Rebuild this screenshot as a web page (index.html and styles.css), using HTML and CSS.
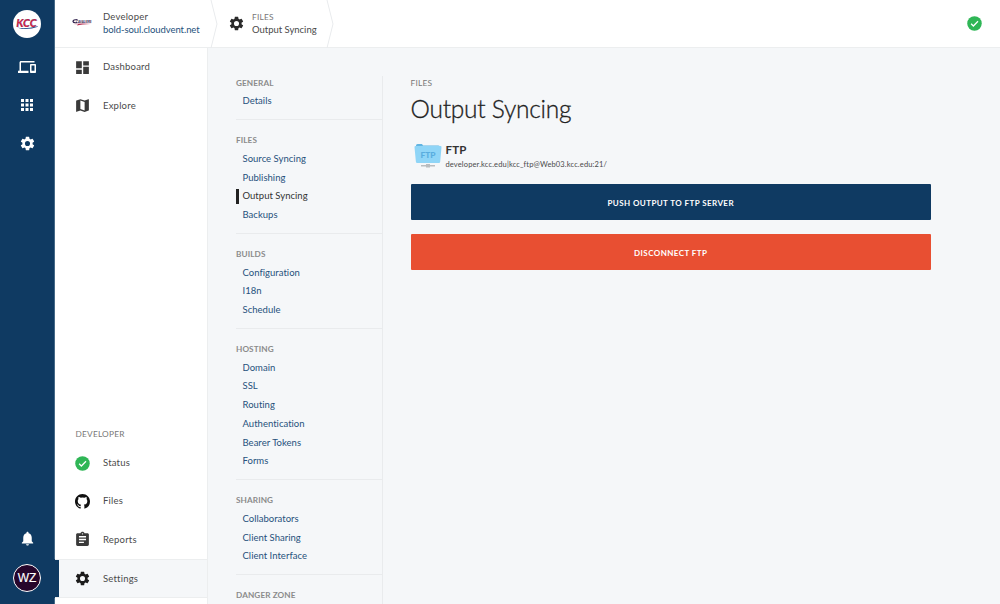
FILE: index.html
```
<!DOCTYPE html>
<html lang="en">
<head>
<meta charset="utf-8">
<title>Output Syncing</title>
<link rel="stylesheet" href="styles.css">
</head>
<body>
<svg width="0" height="0" class="defs">
  <symbol id="gear" viewBox="0 0 24 24"><path d="M19.14 12.94c.04-.3.06-.61.06-.94 0-.32-.02-.64-.07-.94l2.03-1.58a.49.49 0 0 0 .12-.61l-1.92-3.32a.49.49 0 0 0-.59-.22l-2.39.96c-.5-.38-1.03-.7-1.62-.94l-.36-2.54a.48.48 0 0 0-.48-.41h-3.84c-.24 0-.43.17-.47.41l-.36 2.54c-.59.24-1.13.57-1.62.94l-2.39-.96a.48.48 0 0 0-.59.22L2.74 8.87c-.12.21-.08.47.12.61l2.03 1.58c-.05.3-.09.63-.09.94s.02.64.07.94l-2.03 1.58a.49.49 0 0 0-.12.61l1.92 3.32c.12.22.37.29.59.22l2.39-.96c.5.38 1.03.7 1.62.94l.36 2.54c.05.24.24.41.48.41h3.84c.24 0 .44-.17.47-.41l.36-2.54c.59-.24 1.13-.56 1.62-.94l2.39.96c.22.08.47 0 .59-.22l1.92-3.32a.49.49 0 0 0-.12-.61l-2.01-1.58zM12 15.6A3.6 3.6 0 1 1 12 8.4a3.6 3.6 0 0 1 0 7.2z"/></symbol>
  <symbol id="check" viewBox="0 0 24 24"><circle cx="12" cy="12" r="11.6" fill="#2fb656"/><path d="M6.6 12.4l3.6 3.6 7.4-7.6" fill="none" stroke="#fff" stroke-width="2"/></symbol>
</svg>
<div class="app">
  <aside class="rail">
    <svg class="logo" viewBox="0 0 28 28"><circle cx="14" cy="14" r="14" fill="#fff"/><text class="logo-text" x="3.2" y="16.6" textLength="20.5" lengthAdjust="spacingAndGlyphs">KCC</text><path d="M4 17.600q8 2 20.500-1.400l.5.600q-7 2.800-16 2.200z" fill="#234a86"/></svg>
    <svg class="ic devices" viewBox="0 0 24 24"><path d="M4 6h18V4H4c-1.100 0-2 .9-2 2v11H0v3h14v-3H4V6zm19 2h-6c-.55 0-1 .45-1 1v10c0 .55.45 1 1 1h6c.55 0 1-.45 1-1V9c0-.55-.45-1-1-1zm-1 9h-4v-7h4v7z"/></svg>
    <svg class="ic apps" viewBox="0 0 24 24"><path d="M4 8h4V4H4v4zm6 12h4v-4h-4v4zm-6 0h4v-4H4v4zm0-6h4v-4H4v4zm6 0h4v-4h-4v4zm6-10v4h4V4h-4zm-6 4h4V4h-4v4zm6 6h4v-4h-4v4zm0 6h4v-4h-4v4z"/></svg>
    <svg class="ic cog"><use href="#gear"/></svg>
    <svg class="ic bell" viewBox="0 0 24 24"><path d="M12 22c1.100 0 2-.9 2-2h-4c0 1.100.89 2 2 2zm6-6v-5c0-3.070-1.640-5.640-4.500-6.320V4c0-.83-.67-1.500-1.500-1.500s-1.500.67-1.500 1.500v.68C7.630 5.360 6 7.920 6 11v5l-2 2v1h16v-1l-2-2z"/></svg>
    <div class="avatar">WZ</div>
  </aside>
  <div class="shell">
    <header class="top">
      <svg class="site-logo" viewBox="0 0 22 14"><path d="M5.500 4.500Q1 4.500 1 6.500q.5 1.800 4 1" fill="none" stroke="#33244f" stroke-width="1.200"/><text class="site-logo-text" x="4" y="7.800" textLength="15.500" lengthAdjust="spacingAndGlyphs">CAVALIERS</text><path d="M1 9q9-1 19 0-10-.2-15 1.600l1-1.300z" fill="#b3294d"/></svg>
      <div class="crumb site"><span>Developer</span><a>bold-soul.cloudvent.net</a></div>
      <svg class="chev" viewBox="0 0 8 48"><path d="M1 0L7 24 1 48"/></svg>
      <svg class="crumb-icon"><use href="#gear"/></svg>
      <div class="crumb page"><span class="cap">FILES</span><span>Output Syncing</span></div>
      <svg class="chev second" viewBox="0 0 8 48"><path d="M1 0L7 24 1 48"/></svg>
      <svg class="ok"><use href="#check"/></svg>
    </header>
    <div class="body">
      <nav class="side">
        <a class="row"><svg viewBox="0 0 24 24"><path d="M3 13h8V3H3v10zm0 8h8v-6H3v6zm10 0h8V11h-8v10zm0-18v6h8V3h-8z"/></svg><span>Dashboard</span></a>
        <a class="row"><svg viewBox="0 0 24 24"><path d="M20.500 3l-.16.03L15 5.100 9 3 3.360 4.900c-.21.070-.36.25-.36.480V20.500c0 .28.220.5.500.5l.16-.03L9 18.900l6 2.100 5.640-1.900c.21-.07.36-.25.36-.48V3.500c0-.28-.22-.5-.5-.5zM15 19l-6-2.110V5l6 2.110V19z"/></svg><span>Explore</span></a>
        <div class="side-title cap">DEVELOPER</div>
        <a class="row status"><svg class="round"><use href="#check"/></svg><span>Status</span></a>
        <a class="row files"><svg class="git" viewBox="0 0 16 16"><path d="M8 0C3.580 0 0 3.580 0 8c0 3.540 2.290 6.530 5.470 7.590.4.070.55-.17.55-.38 0-.19-.01-.82-.01-1.490-2.010.37-2.530-.49-2.690-.94-.09-.23-.48-.94-.82-1.130-.28-.15-.68-.52-.01-.53.63-.01 1.080.58 1.230.82.72 1.210 1.870.87 2.330.66.070-.52.28-.87.510-1.070-1.780-.2-3.640-.89-3.640-3.950 0-.87.310-1.590.82-2.150-.08-.2-.36-1.020.080-2.120 0 0 .67-.21 2.200.82a7.600 7.600 0 0 1 4 0c1.530-1.040 2.200-.82 2.200-.82.44 1.100.16 1.920.080 2.120.51.56.82 1.270.82 2.150 0 3.070-1.870 3.750-3.650 3.950.29.25.54.73.54 1.480 0 1.070-.01 1.930-.01 2.200 0 .21.15.46.55.38A8 8 0 0 0 16 8c0-4.420-3.580-8-8-8z"/></svg><span>Files</span></a>
        <a class="row"><svg viewBox="0 0 24 24"><path d="M19 3h-4.180C14.400 1.840 13.300 1 12 1S9.600 1.840 9.180 3H5c-1.100 0-2 .9-2 2v14c0 1.100.9 2 2 2h14c1.100 0 2-.9 2-2V5c0-1.100-.9-2-2-2zm-7 0a1 1 0 1 1 0 2 1 1 0 0 1 0-2zm2 14H7v-2h7v2zm3-4H7v-2h10v2zm0-4H7V7h10v2z"/></svg><span>Reports</span></a>
        <a class="row active"><svg><use href="#gear"/></svg><span>Settings</span></a>
      </nav>
      <nav class="menu">
        <section><h2>GENERAL</h2><a>Details</a></section>
        <section><h2>FILES</h2><a>Source Syncing</a><a>Publishing</a><a class="current">Output Syncing</a><a>Backups</a></section>
        <section><h2>BUILDS</h2><a>Configuration</a><a>I18n</a><a>Schedule</a></section>
        <section><h2>HOSTING</h2><a>Domain</a><a>SSL</a><a>Routing</a><a>Authentication</a><a>Bearer Tokens</a><a>Forms</a></section>
        <section><h2>SHARING</h2><a>Collaborators</a><a>Client Sharing</a><a>Client Interface</a></section>
        <section><h2>DANGER ZONE</h2></section>
      </nav>
      <main class="main">
        <div class="cap kicker">FILES</div>
        <h1>Output Syncing</h1>
        <div class="ftp">
          <svg class="folder" viewBox="0 0 28 26"><path d="M2 4V2.500Q2 1 3.500 1H8l1 1.500h15.500Q26 2.500 26 4v3H2z" fill="#62b5e2"/><path d="M1.500 3h25q1.200 0 1 1.300l-1.300 14.500Q26 20 25 20H3.200Q2 20 1.900 18.800L.5 4.300Q.4 3 1.500 3z" fill="#8fd5f7"/><text class="folder-text" x="6.500" y="15.200" textLength="15" lengthAdjust="spacingAndGlyphs">FTP</text><path d="M12 21h4v1h5v1.500h-5v1h-4v-1H7V22h5z" fill="#b9bdc0"/></svg>
          <div class="ftp-info"><strong>FTP</strong><small>developer.kcc.edu|kcc_ftp@Web03.kcc.edu:21/</small></div>
        </div>
        <button class="push">PUSH OUTPUT TO FTP SERVER</button>
        <button class="drop">DISCONNECT FTP</button>
      </main>
    </div>
  </div>
</div>
</body>
</html>
```
FILE: styles.css
```
* { box-sizing: border-box; }
body { margin: 0; font: 9.5px/12px Lato, "Open Sans", sans-serif; letter-spacing: .2px; color: #4a4a4a; background: #f5f7f9; overflow: hidden; }
.defs { display: block; position: absolute; }
svg { display: block; flex: none; }
.app { display: flex; height: 604px; }
.rail { width: 55px; background: #0f3a62; border-right: 1px solid #466987; display: flex; flex-direction: column; align-items: center; padding-top: 10px; flex: none; }
.logo { width: 28px; height: 28px; }
.logo-text { font: italic 900 10.5px Lato, sans-serif; letter-spacing: 0; fill: #d51f46; stroke: #26417e; stroke-width: .2px; }
.ic { width: 18px; height: 18px; fill: #fff; }
.devices { margin-top: 20px; }
.apps { margin-top: 20px; }
.cog { width: 17px; height: 17px; margin-top: 21px; }
.bell { width: 17px; height: 17px; margin-top: auto; }
.avatar { width: 28px; height: 28px; border: 1.5px solid #fff; border-radius: 50%; background: #27052b; color: #fff; font: 12px/27px "Liberation Sans", sans-serif; letter-spacing: 0; text-align: center; -webkit-text-stroke: .15px #fff; margin: 17px 0 12px; }
.shell { flex: 1; display: flex; flex-direction: column; min-width: 0; }
.top { height: 48px; background: #fff; border-bottom: 1px solid #eceeef; display: flex; align-items: center; padding: 0 18.5px 0 17px; flex: none; }
.site-logo { width: 22px; height: 14px; margin-top: -4px; overflow: visible; }
.site-logo-text { font: italic 900 4.5px Lato, sans-serif; letter-spacing: 0; fill: #33244f; }
.crumb { display: flex; flex-direction: column; line-height: 12.500px; white-space: nowrap; padding-top: .5px; }
.site { margin-left: 9px; width: 107px; }
.site a { color: #26517c; letter-spacing: -.07px; }
.chev { width: 8px; height: 48px; fill: none; stroke: #e9ebed; stroke-width: 1; }
.crumb-icon { width: 17px; height: 17px; fill: #2b2b2b; margin-left: 10px; }
.page { margin-left: 7px; width: 74px; letter-spacing: -.02px; }
.cap { color: #777; font-size: 8.300px; letter-spacing: .22px; }
.ok { width: 15px; height: 15px; margin-left: auto; }
.body { flex: 1; display: flex; min-height: 0; }
.side { width: 153px; background: #fff; border-right: 1px solid #eceeef; display: flex; flex-direction: column; padding-bottom: 6px; flex: none; }
.row { height: 38.500px; display: flex; align-items: center; padding-left: 19px; gap: 12px; }
.row svg { width: 17px; height: 17px; fill: #3a3a3a; }
.row .git { width: 15px; height: 15px; fill: #111; margin: 0 1px; }
.row .round { width: 15px; height: 15px; margin: 0 1px; }
.side-title { margin-top: auto; padding-left: 20.5px; height: 17px; }
.status { height: 37.500px; }
.files { height: 38.5px; }
.active { height: 39px; background: #f5f7f9; border-top: 1px solid #eceeef; border-bottom: 1px solid #eceeef; box-shadow: inset 4px 0 #0f3a62, -1px 0 #0f3a62; }
.row.active svg { fill: #1c1c1c; }
.menu { width: 147px; margin: 28px 0 0 28px; border-right: 1px solid #e9ebed; display: flex; flex-direction: column; flex: none; }
section { border-bottom: 1px solid #e9ebed; padding-bottom: 8.250px; margin-bottom: 10.250px; display: flex; flex-direction: column; flex: none; }
section:first-child { margin-top: -3px; }
section:last-child { margin-bottom: 0; border: 0; }
h2 { margin: 0; padding-top: .75px; font-size: 8.200px; font-weight: 700; line-height: 18.500px; letter-spacing: .1px; color: #8b8b8b; }
.menu a { height: 18.750px; line-height: 18.750px; padding-left: 6.5px; color: #26517c; letter-spacing: .02px; }
.menu a.current { color: #333; background: linear-gradient(#222, #222) 0 50% / 3px 15px no-repeat; }
.main { width: 521px; margin: 28px 0 0 27.5px; display: flex; flex-direction: column; flex: none; }
.kicker { line-height: 14px; }
h1 { margin: 3px 0 0; font-size: 24.5px; font-weight: 300; line-height: 32px; letter-spacing: -.25px; color: #222; -webkit-text-stroke: .3px #222; }
.ftp { display: flex; margin-top: 18px; height: 26px; padding-left: 3.5px; }
.folder { width: 28px; height: 26px; }
.folder-text { font: 900 8px Lato, sans-serif; letter-spacing: 0; fill: #58addf; }
.ftp-info { display: flex; flex-direction: column; margin-left: 3.5px; }
.ftp-info strong { font-size: 11.500px; line-height: 14px; color: #333; }
.ftp-info small { font-size: 7.500px; line-height: 16px; letter-spacing: .14px; }
button { height: 36px; border: 0; border-radius: 1px; color: #fff; font: 700 8px Lato, sans-serif; letter-spacing: .42px; padding: 1px 0 0; margin-right: .6px; }
.push { background: #0f3a62; margin-top: 15px; }
.drop { background: #e84f32; margin-top: 14px; }
```
